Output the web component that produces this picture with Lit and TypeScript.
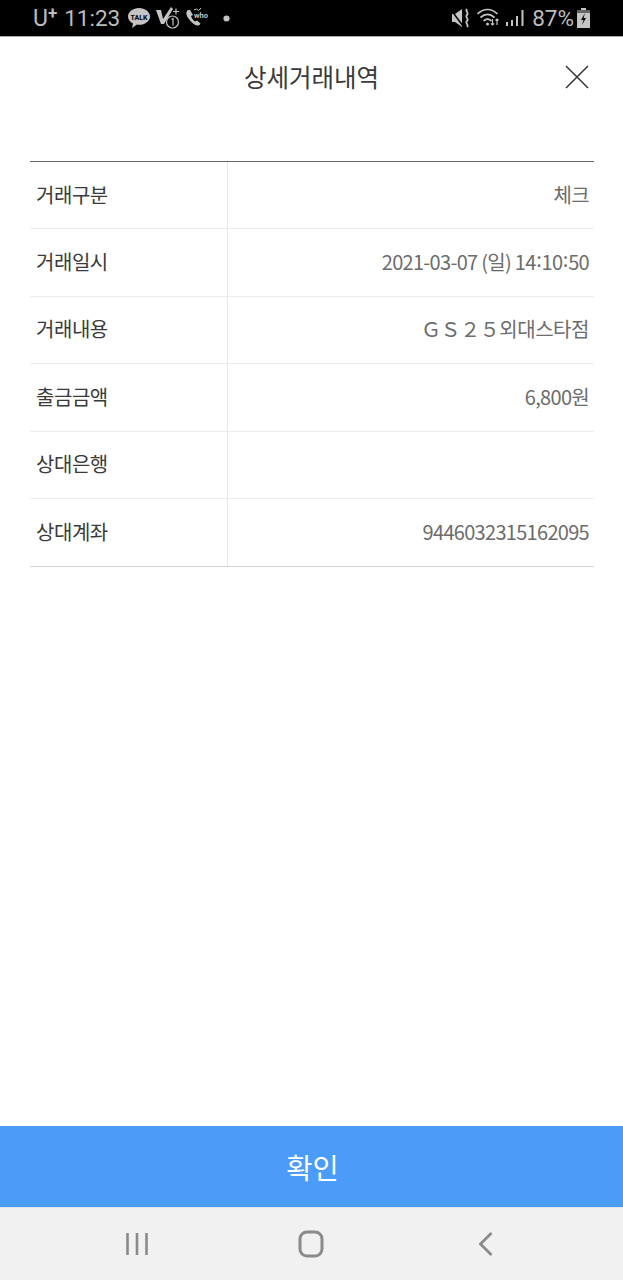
import { LitElement, html, css, svg } from "lit";
import { customElement } from "lit/decorators.js";

const rows: [string, unknown][] = [
  ["거래구분", "체크"],
  ["거래일시", html`2021-03-07 (일) 14<span class="colon">:</span>10<span class="colon">:</span>50`],
  ["거래내용", html`<span class="store">ＧＳ２５외대스타점</span>`],
  ["출금금액", "6,800원"],
  ["상대은행", ""],
  ["상대계좌", "9446032315162095"],
];

@customElement("app-root")
export class AppRoot extends LitElement {
  static styles = css`
    :host {
      display: flex;
      flex-direction: column;
      width: 623px;
      height: 1280px;
      background: #fff;
      font-family: "Noto Sans CJK KR", "Noto Sans", sans-serif;
      overflow: hidden;
    }
    .status {
      height: 36px;
      flex: none;
      background: #000;
      border-bottom: 1px solid #aaa;
      box-sizing: content-box;
      display: flex;
      align-items: center;
      justify-content: space-between;
      padding: 0 33px 0 33px;
      color: #bdbdbd;
      font-family: "Roboto", sans-serif;
      font-size: 22.500px;
    }
    .status-left, .status-right { display: flex; align-items: center; }
    .carrier { font-size: 23px; display: flex; align-items: flex-start; margin-right: 7px; }
    .carrier sup { font-size: 17px; line-height: 16px; font-weight: 700; }
    .clock { margin-right: 8px; }
    .status svg { display: block; flex: none; }
    .header {
      height: 82px;
      flex: none;
      display: flex;
      align-items: center;
      justify-content: center;
      position: relative;
      font-size: 24.500px;
      color: #3a3a3a;
      padding-bottom: 4px;
      box-sizing: border-box;
    }
    .close { position: absolute; left: 565px; top: 28px; display: block; }
    .table {
      margin: 42px 29px 0 30px;
      border-top: 1px solid #666;
      border-bottom: 1px solid #d4d4d4;
    }
    .row {
      display: grid;
      grid-template-columns: 198px 1fr;
      height: 67.400px;
      box-sizing: border-box;
      border-bottom: 1px solid #ececec;
    }
    .row:last-child { border-bottom: 0; }
    .label {
      border-right: 1px solid #e8e8e8;
      display: flex;
      align-items: center;
      padding: 0 0 2px 6px;
      font-size: 20px;
      color: #3a3a3a;
      letter-spacing: -0.450px;
    }
    .value {
      display: flex;
      align-items: center;
      justify-content: flex-end;
      padding: 0 5px 2px 0;
      font-size: 20px;
      color: #6c6c6c;
      letter-spacing: -0.700px;
      white-space: pre;
    }
    .colon { display: inline-block; transform: translateY(-3px); margin: 0 0.500px; }
    .store { letter-spacing: -0.450px; }
    .spacer { flex: 1; }
    .confirm {
      height: 82px;
      flex: none;
      background: #4b9cf8;
      color: #fff;
      font-size: 28.500px;
      display: flex;
      align-items: center;
      justify-content: center;
      padding-left: 2px;
      box-sizing: border-box;
      border-bottom: 1px solid #dfe6ea;
    }
    .nav {
      height: 72px;
      flex: none;
      background: #f1f1f1;
      display: grid;
      grid-template-columns: 125px 24px 149px 26px 150px 24px 1fr;
      align-items: center;
    }
    .nav svg { display: block; grid-row: 1; }
    .nav .a { grid-column: 2; justify-self: center; }
    .nav .b { grid-column: 4; justify-self: center; }
    .nav .c { grid-column: 6; justify-self: center; }
  `;

  render() {
    return html`
      <div class="status">
        <div class="status-left">
          <span class="carrier">U<sup>+</sup></span>
          <span class="clock">11:23</span>
          <svg width="22" height="20" viewBox="0 0 22 20" style="margin-right:6px">
            <path d="M11 0C5 0 0 3.800 0 8.500c0 3 2 5.600 5 7L4 20l5-3.400c.7.100 1.300.2 2 .2 6 0 11-3.700 11-8.300S17 0 11 0z" fill="#c4c4c4"/>
            ${svg`<text x="11" y="11.500" text-anchor="middle" font-size="7" font-weight="700" font-family="Roboto" fill="#000">TALK</text>`}
          </svg>
          <svg width="24" height="24" viewBox="0 0 24 24" style="margin-right:5px">
            <path d="M0 4h5l2 9 8-12 2 2-9 15H5z" fill="#c4c4c4"/>
            <path d="M12 9v-1" stroke="#c4c4c4" stroke-width="1.500"/>
            <circle cx="16.500" cy="16" r="6" fill="none" stroke="#c4c4c4" stroke-width="1.200"/>
            <path d="M15.500 13.500l1.500-1v7" fill="none" stroke="#c4c4c4" stroke-width="1.200"/>
            <path d="M17 5.500h6M20 2.500v6" stroke="#c4c4c4" stroke-width="1.200"/>
          </svg>
          <svg width="24" height="22" viewBox="0 0 24 22" style="margin-right:14px">
            <path d="M3 3c-2.500 2-2 5 .5 8.500s6 6.500 8.500 7c1.500.3 3-.5 3.500-2l-3.500-3-2 1c-1.500-1-3.500-3.500-4-5.500L8 8 5 3z" fill="#c4c4c4"/>
            ${svg`<text x="9" y="11" font-size="7.500" font-weight="700" font-family="Roboto" fill="#c4c4c4">who</text>`}
            <path d="M9 3l2.500-1 2 1.500 2.500-2.500" fill="none" stroke="#c4c4c4" stroke-width="1"/>
          </svg>
          <svg width="7" height="7" viewBox="0 0 8 8"><circle cx="4" cy="4" r="3.500" fill="#c4c4c4"/></svg>
        </div>
        <div class="status-right">
          <svg width="20" height="20" viewBox="0 0 20 20" style="margin-right:6px">
            <path d="M1 6h3l7-5v18l-7-5H1z" fill="#c4c4c4"/>
            <path d="M0 2l12 16" stroke="#000" stroke-width="1.500"/>
            <path d="M16 1c-2.500 2.500 2.500 3.500 0 6s2.500 3.500 0 6 2.500 3.500 0 6" fill="none" stroke="#c4c4c4" stroke-width="1.800"/>
          </svg>
          <svg width="23" height="20" viewBox="0 0 23 20" style="margin-right:6px">
            <path d="M0.500 6c6-6 14-6 20 0M3.500 9.500c4.500-4 9.500-4 14 0M6.500 13c2.500-2.500 5.500-2.500 8 0" fill="none" stroke="#c4c4c4" stroke-width="1.700"/>
            <circle cx="10.500" cy="16" r="1.500" fill="#c4c4c4"/>
            <path d="M15.500 11v6M14 15.500l1.500 1.500 1.500-1.500M20 17v-6M18.500 12.500l1.500-1.500 1.500 1.500" fill="none" stroke="#c4c4c4" stroke-width="1.200"/>
          </svg>
          <svg width="18" height="20" viewBox="0 0 18 20" style="margin-right:8px">
            <path d="M0 14h2v4H0zM5 12h2v6H5zM10 8h2v10h-2zM15.500 2h2v16h-2z" fill="#c4c4c4"/>
          </svg>
          <span style="margin-right:3px">87%</span>
          <svg width="13" height="20" viewBox="0 0 13 20">
            <path d="M4 0h5v2h4v18H0V2h4z" fill="#c4c4c4"/>
            <path d="M0 2h13v3H0z" fill="#666"/>
            <path d="M8 5l-4 7h2.500L5 17l4-7H6.500z" fill="#000"/>
          </svg>
        </div>
      </div>
      <div class="header">
        상세거래내역
        <svg class="close" width="24" height="24" viewBox="0 0 24 24">
          <path d="M1 1l22 22M23 1L1 23" stroke="#333" stroke-width="1.500" fill="none"/>
        </svg>
      </div>
      <div class="table">
        ${rows.map(
          ([k, v]) => html`<div class="row">
            <div class="label">${k}</div>
            <div class="value">${v}</div>
          </div>`
        )}
      </div>
      <div class="spacer"></div>
      <div class="confirm">확인</div>
      <div class="nav">
        <svg class="a" width="24" height="24" viewBox="0 0 24 24">
          <path d="M2.500 1v22M12 1v22M21.500 1v22" stroke="#8a8a8a" stroke-width="2.600" fill="none"/>
        </svg>
        <svg class="b" width="26" height="28" viewBox="0 0 26 28">
          <rect x="2" y="2" width="22" height="24" rx="7" stroke="#8a8a8a" stroke-width="3" fill="none"/>
        </svg>
        <svg class="c" width="16" height="26" viewBox="0 0 16 26">
          <path d="M13.500 2L2.500 13l11 11" stroke="#8a8a8a" stroke-width="2.800" fill="none"/>
        </svg>
      </div>
    `;
  }
}
